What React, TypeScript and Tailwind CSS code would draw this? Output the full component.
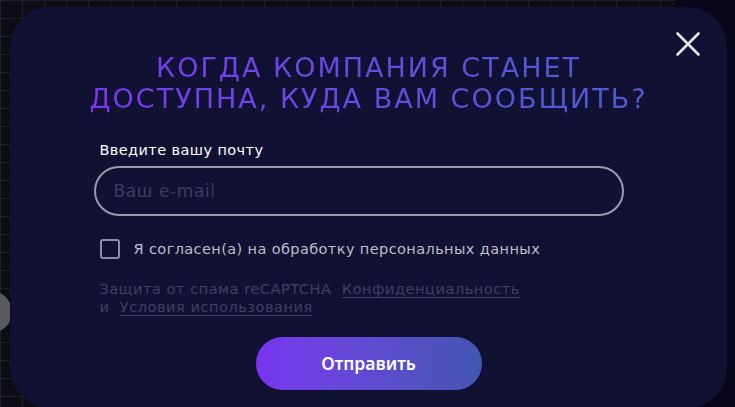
import React from 'react';

export default function App() {
  return (
    <div className="relative w-[735px] h-[407px] overflow-hidden bg-[#0c0c14] bg-[linear-gradient(90deg,rgba(255,255,255,0.07)_1px,transparent_1px),linear-gradient(rgba(255,255,255,0.07)_1px,transparent_1px)] bg-[size:22px_18px]" style={{ fontFamily: '"DejaVu Sans", "Noto Sans", sans-serif' }}>
      {/* right side of backdrop is almost black */}
      <div className="absolute right-0 top-0 h-full w-[60px] bg-[#07061a]" />
      {/* slider arrow peeking out behind the modal */}
      <div className="absolute left-[-30px] top-[291px] w-[42px] h-[42px] rounded-full bg-[#5a5a5e]" />

      <div className="relative ml-[10px] mt-[7px] w-[717px] h-[401px] rounded-[40px] bg-[#111233] flex flex-col items-center">
        <button className="absolute right-[27px] top-[25px] w-[24px] h-[24px] text-[#e4e4ea]">
          <svg viewBox="0 0 24 24" className="w-[24px] h-[24px]" fill="none" stroke="currentColor" strokeWidth="2.6" strokeLinecap="round">
            <path d="M1.5 1.5L22.5 22.5M22.5 1.5L1.5 22.5" />
          </svg>
        </button>

        <h2 className="mt-[45px] w-fit text-center text-[27px] leading-[31px] tracking-[2px] font-normal uppercase bg-gradient-to-r from-[#7a36f0] to-[#4a5bcf] bg-clip-text text-transparent">
          Когда компания станет
          <br />
          доступна, куда вам сообщить?
        </h2>

        <div className="mt-[26px] mr-[20px] w-[530px] flex flex-col">
          <label className="pl-[6px] text-[14.5px] leading-[20px] tracking-[0.4px] text-white">Введите вашу почту</label>
          <input
            placeholder="Ваш e-mail"
            className="mt-[6px] h-[50px] rounded-full border-2 border-[#9a9aae] bg-transparent px-[18px] text-[17px] tracking-[0.6px] text-white placeholder:text-[#3b3b5e] outline-none"
          />

          <label className="mt-[23px] ml-[6px] flex items-center gap-[14px]">
            <span className="w-[20px] h-[20px] rounded-[3px] border-2 border-[#8e8ea2]" />
            <span className="text-[14.5px] leading-[20px] tracking-[0.4px] text-[#bdbdcb]">Я согласен(а) на обработку персональных данных</span>
          </label>

          <p className="mt-[21px] ml-[6px] text-[14.5px] leading-[18px] tracking-[0.55px] text-[#3f3f62]">
            Защита от спама reCAPTCHA&nbsp;&nbsp;<a className="underline underline-offset-3">Конфиденциальность</a>
            <br />
            и&nbsp;&nbsp;<a className="underline underline-offset-3">Условия использования</a>
          </p>
        </div>

        <button className="mt-[21px] w-[226px] h-[53px] rounded-full bg-gradient-to-r from-[#7834f0] to-[#4356b2] text-white text-[17.5px] font-semibold" style={{ fontFamily: '"Noto Sans", sans-serif' }}>
          Отправить
        </button>
      </div>
    </div>
  );
}
